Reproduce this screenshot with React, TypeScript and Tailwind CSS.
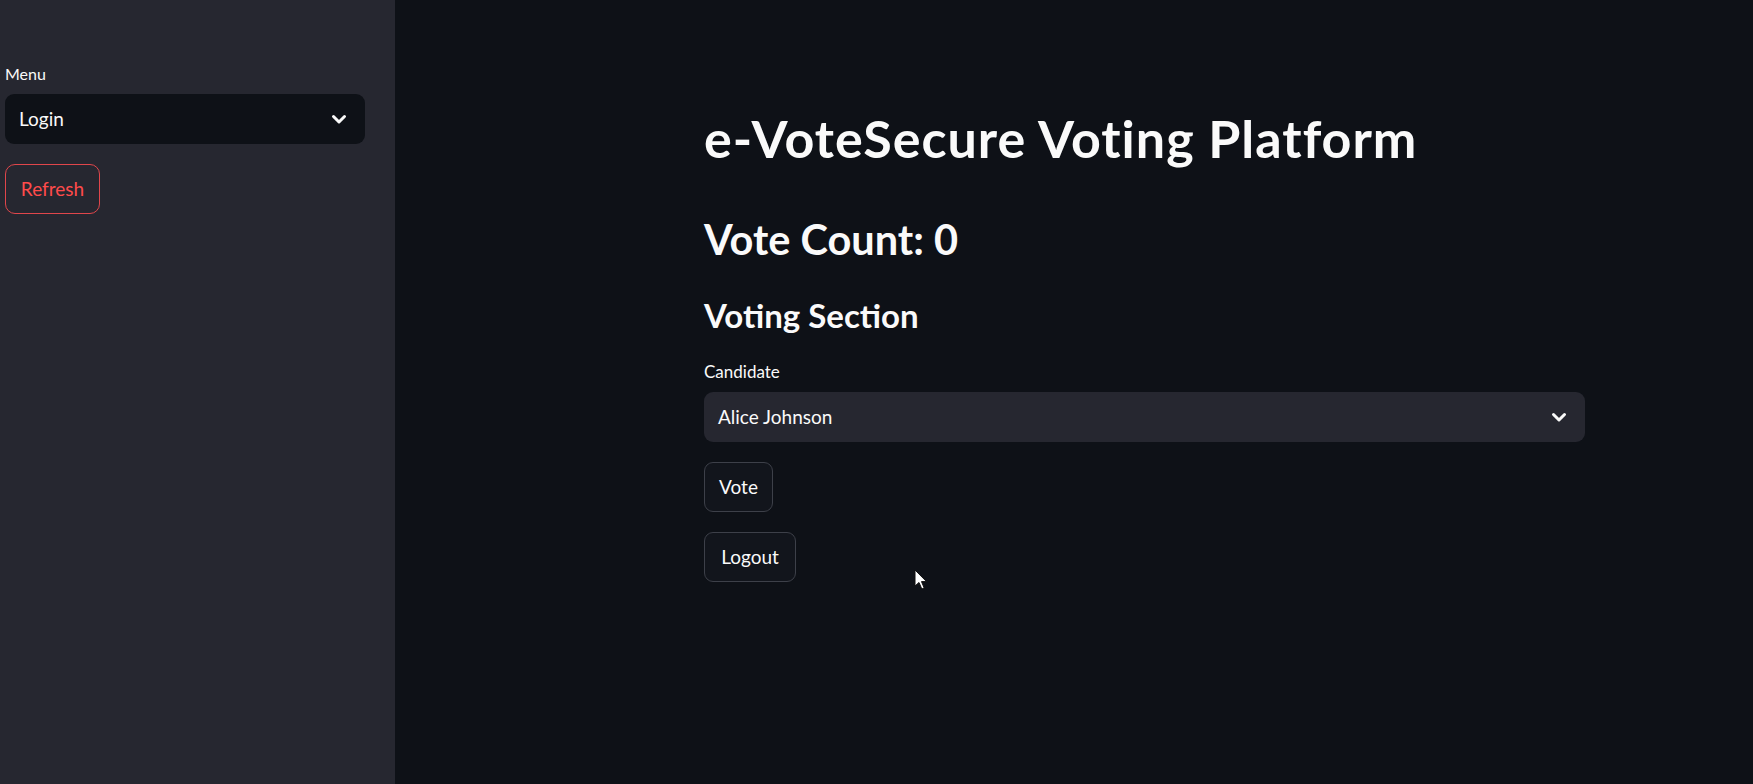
import React from "react";

function Chevron() {
  return (
    <svg width="16" height="11" viewBox="0 0 16 11" fill="none">
      <path d="M2.5 2.5 L8 8 L13.5 2.5" stroke="#fafafa" strokeWidth="3" strokeLinecap="round" strokeLinejoin="round" />
    </svg>
  );
}

function Cursor() {
  return (
    <svg width="14" height="22" viewBox="0 0 14 22" className="absolute left-[914px] top-[569px]">
      <path d="M1 1 L1 17 L5 13.5 L7.8 20 L10.2 19 L7.5 12.6 L12.5 12.6 Z" fill="#ffffff" stroke="#111" strokeWidth="1" strokeLinejoin="round" />
    </svg>
  );
}

export default function App() {
  return (
    <div className="relative flex h-[784px] w-[1753px] overflow-hidden bg-[#0e1117] text-[#fafafa]" style={{ fontFamily: "Lato, 'Liberation Sans', sans-serif" }}>
      <aside className="flex h-full w-[395px] shrink-0 flex-col bg-[#262730] pl-[5px] pr-[30px] pt-[64px]">
        <div className="h-[20px] text-[16px] leading-[20px]">Menu</div>
        <div className="mt-[10px] flex h-[50px] items-center justify-between rounded-[9px] bg-[#0e1117] pl-[14px] pr-[18px]">
          <span className="text-[19px]">Login</span>
          <Chevron />
        </div>
        <div className="mt-[20px] flex h-[50px] w-[95px] items-center justify-center rounded-[10px] border border-[#e0464b] text-[19px] text-[#ff4b4b]">
          Refresh
        </div>
      </aside>
      <main className="flex flex-1 flex-col pl-[309px] pt-[108px]">
        <div className="w-[881px]">
          <h1 className="h-[60px] text-[52px] font-bold leading-[60px] tracking-[1px]">e-VoteSecure Voting Platform</h1>
          <h2 className="mt-[47px] h-[48px] text-[41.5px] font-bold leading-[48px]">Vote Count: 0</h2>
          <h3 className="mt-[33px] h-[38px] text-[33px] font-bold leading-[38px]">Voting Section</h3>
          <div className="mt-[28px] h-[20px] text-[17px] leading-[20px]">Candidate</div>
          <div className="mt-[10px] flex h-[50px] items-center justify-between rounded-[9px] bg-[#262730] pl-[14px] pr-[18px]">
            <span className="text-[19px]">Alice Johnson</span>
            <Chevron />
          </div>
          <div className="mt-[20px] flex h-[50px] w-[69px] items-center justify-center rounded-[9px] border border-[#3d4049] bg-[#12151c] text-[19px]">
            Vote
          </div>
          <div className="mt-[20px] flex h-[50px] w-[92px] items-center justify-center rounded-[9px] border border-[#3d4049] bg-[#12151c] text-[19px]">
            Logout
          </div>
        </div>
      </main>
      <Cursor />
    </div>
  );
}
